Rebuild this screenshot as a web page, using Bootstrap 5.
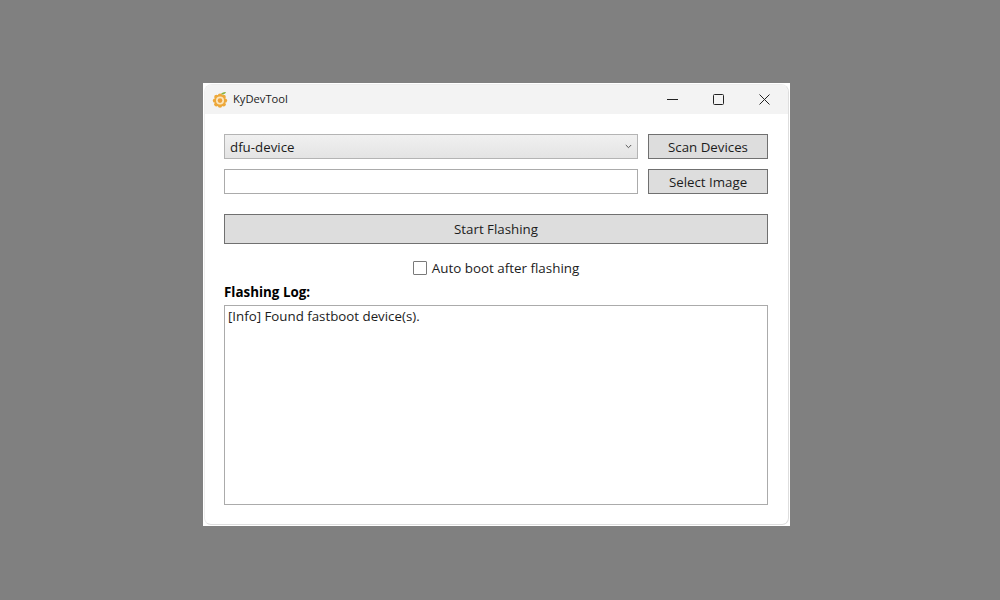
<!DOCTYPE html>
<html lang="en">

<head>
    <meta charset="UTF-8">
    <meta name="viewport" content="width=device-width, initial-scale=1.0">
    <title>KyDevTool</title>
    <link href="https://cdn.jsdelivr.net/npm/bootstrap@5.3.3/dist/css/bootstrap.min.css" rel="stylesheet">
    <script src="https://cdn.jsdelivr.net/npm/bootstrap@5.3.3/dist/js/bootstrap.bundle.min.js"></script>
    <style>
        body {
            background-color: #808080;
            font-family: "Open Sans", "Noto Sans", sans-serif;
            font-size: 13.3px;
            color: #1c1c1c;
        }

        /* square white backing behind the rounded window, as in the capture */
        .window-back {
            width: 587px;
            height: 443px;
            margin: 83px 0 0 203px;
            padding: 1px;
            background-color: #fff;
        }

        .app-window {
            height: 100%;
            background-color: #fff;
            border: 1px solid #eeeeee;
            border-right-color: #dedede;
            border-bottom-color: #dedede;
            border-radius: 8px 8px 7px 7px;
            overflow: hidden;
        }

        .title-bar {
            height: 29px;
            flex-shrink: 0;
            background-color: #f3f3f3;
            padding: 0 1px 0 7px;
        }

        .title-text {
            font-size: 11.2px;
            margin-left: 4px;
        }

        .win-btn {
            width: 46px;
            height: 29px;
        }

        .app-body {
            padding: 20px 20px 20px 19px;
        }

        .app-select.form-select,
        .app-input.form-control {
            height: 25px;
            min-height: 0;
            border-radius: 0;
            font-size: 13.3px;
            color: #1c1c1c;
            box-shadow: none;
        }

        .app-select.form-select {
            width: 414px;
            padding: 3px 20px 0 5px;
            border-color: #b4b4b4;
            background-color: #e6e6e6;
            background-image: url("data:image/svg+xml,%3csvg xmlns='http://www.w3.org/2000/svg' viewBox='0 0 7 5'%3e%3cpath fill='none' stroke='%23555' d='M.8 1l2.7 2.7L6.2 1'/%3e%3c/svg%3e"), linear-gradient(#f0f0f0, #e4e4e4);
            background-repeat: no-repeat;
            background-position: right 5px center, 0 0;
            background-size: 7px 5px, 100% 100%;
        }

        .app-input.form-control {
            width: 414px;
            padding: 0 5px;
            border-color: #ababab;
        }

        .input-row {
            margin-top: 10px;
        }

        .app-btn.btn {
            height: 25px;
            padding: 1px 0 0;
            border: 1px solid #707070;
            border-radius: 0;
            background-color: #dddddd;
            color: #1c1c1c;
            font-size: 13.3px;
            line-height: 1;
        }

        .side-btn.btn {
            width: 120px;
            margin-left: 10px;
            padding-top: 3px;
        }

        .flash-btn.btn {
            height: 30px;
            margin-top: 20px;
        }

        .boot-row {
            margin-top: 16px;
            height: 16px;
        }

        .boot-row .form-check-input {
            width: 14px;
            height: 14px;
            margin: 0 5px 0 0;
            border: 1px solid #7a7a7a;
            border-radius: 1px;
            float: none;
        }

        .boot-row .form-check-label {
            font-size: 13.4px;
            line-height: 16px;
        }

        .log-title {
            font-size: 13.4px;
            line-height: 16px;
            margin: 8px 0 5px;
            color: #000;
        }

        .log-box.form-control {
            height: 200px;
            padding: 1px 3px;
            border: 1px solid #ababab;
            border-radius: 0;
            font-size: 13.3px;
            line-height: 18px;
            color: #1c1c1c;
            resize: none;
            box-shadow: none;
        }
    </style>
</head>

<body>
    <div class="window-back">
        <div class="app-window d-flex flex-column">
            <div class="title-bar d-flex align-items-center">
                <svg width="17" height="17" viewBox="0 0 17 17">
                    <path d="M8.5 3.6C9.6 1.6 11.6.8 14 1 13.2 3 11 4 8.5 3.6Z" fill="#8bb33f"/>
                    <g fill="#eda83a">
                        <circle cx="8" cy="4.6" r="2.2"/>
                        <circle cx="11.6" cy="6" r="2.2"/>
                        <circle cx="13" cy="9.6" r="2.2"/>
                        <circle cx="11.6" cy="13.2" r="2.2"/>
                        <circle cx="8" cy="14.6" r="2.2"/>
                        <circle cx="4.4" cy="13.2" r="2.2"/>
                        <circle cx="3" cy="9.6" r="2.2"/>
                        <circle cx="4.4" cy="6" r="2.2"/>
                        <circle cx="8" cy="9.6" r="5"/>
                    </g>
                    <circle cx="8" cy="9.6" r="4" fill="#fbe6bd"/>
                    <circle cx="8" cy="9.6" r="2.3" fill="#eda13a"/>
                </svg>
                <span class="title-text">KyDevTool</span>
                <div class="d-flex ms-auto">
                    <div class="win-btn d-flex align-items-center justify-content-center">
                        <svg width="11" height="11" viewBox="0 0 11 11"><path d="M0 5.5H11" stroke="#222"/></svg>
                    </div>
                    <div class="win-btn d-flex align-items-center justify-content-center">
                        <svg width="11" height="11" viewBox="0 0 11 11"><rect x=".5" y=".5" width="10" height="10" rx="1" fill="none" stroke="#222"/></svg>
                    </div>
                    <div class="win-btn d-flex align-items-center justify-content-center">
                        <svg width="11" height="11" viewBox="0 0 11 11"><path d="M.5.5L10.5 10.5M10.5.5L.5 10.5" stroke="#222"/></svg>
                    </div>
                </div>
            </div>
            <div class="app-body flex-grow-1">
                <div class="d-flex">
                    <select class="form-select app-select">
                        <option>dfu-device</option>
                    </select>
                    <button type="button" class="btn app-btn side-btn">Scan Devices</button>
                </div>
                <div class="d-flex input-row">
                    <input type="text" class="form-control app-input">
                    <button type="button" class="btn app-btn side-btn">Select Image</button>
                </div>
                <button type="button" class="btn app-btn flash-btn w-100 d-block">Start Flashing</button>
                <div class="boot-row d-flex align-items-center justify-content-center">
                    <input class="form-check-input" type="checkbox" id="autoBoot">
                    <label class="form-check-label" for="autoBoot">Auto boot after flashing</label>
                </div>
                <div class="log-title fw-bold">Flashing Log:</div>
                <textarea class="form-control log-box" readonly>[Info] Found fastboot device(s).</textarea>
            </div>
        </div>
    </div>
</body>

</html>
